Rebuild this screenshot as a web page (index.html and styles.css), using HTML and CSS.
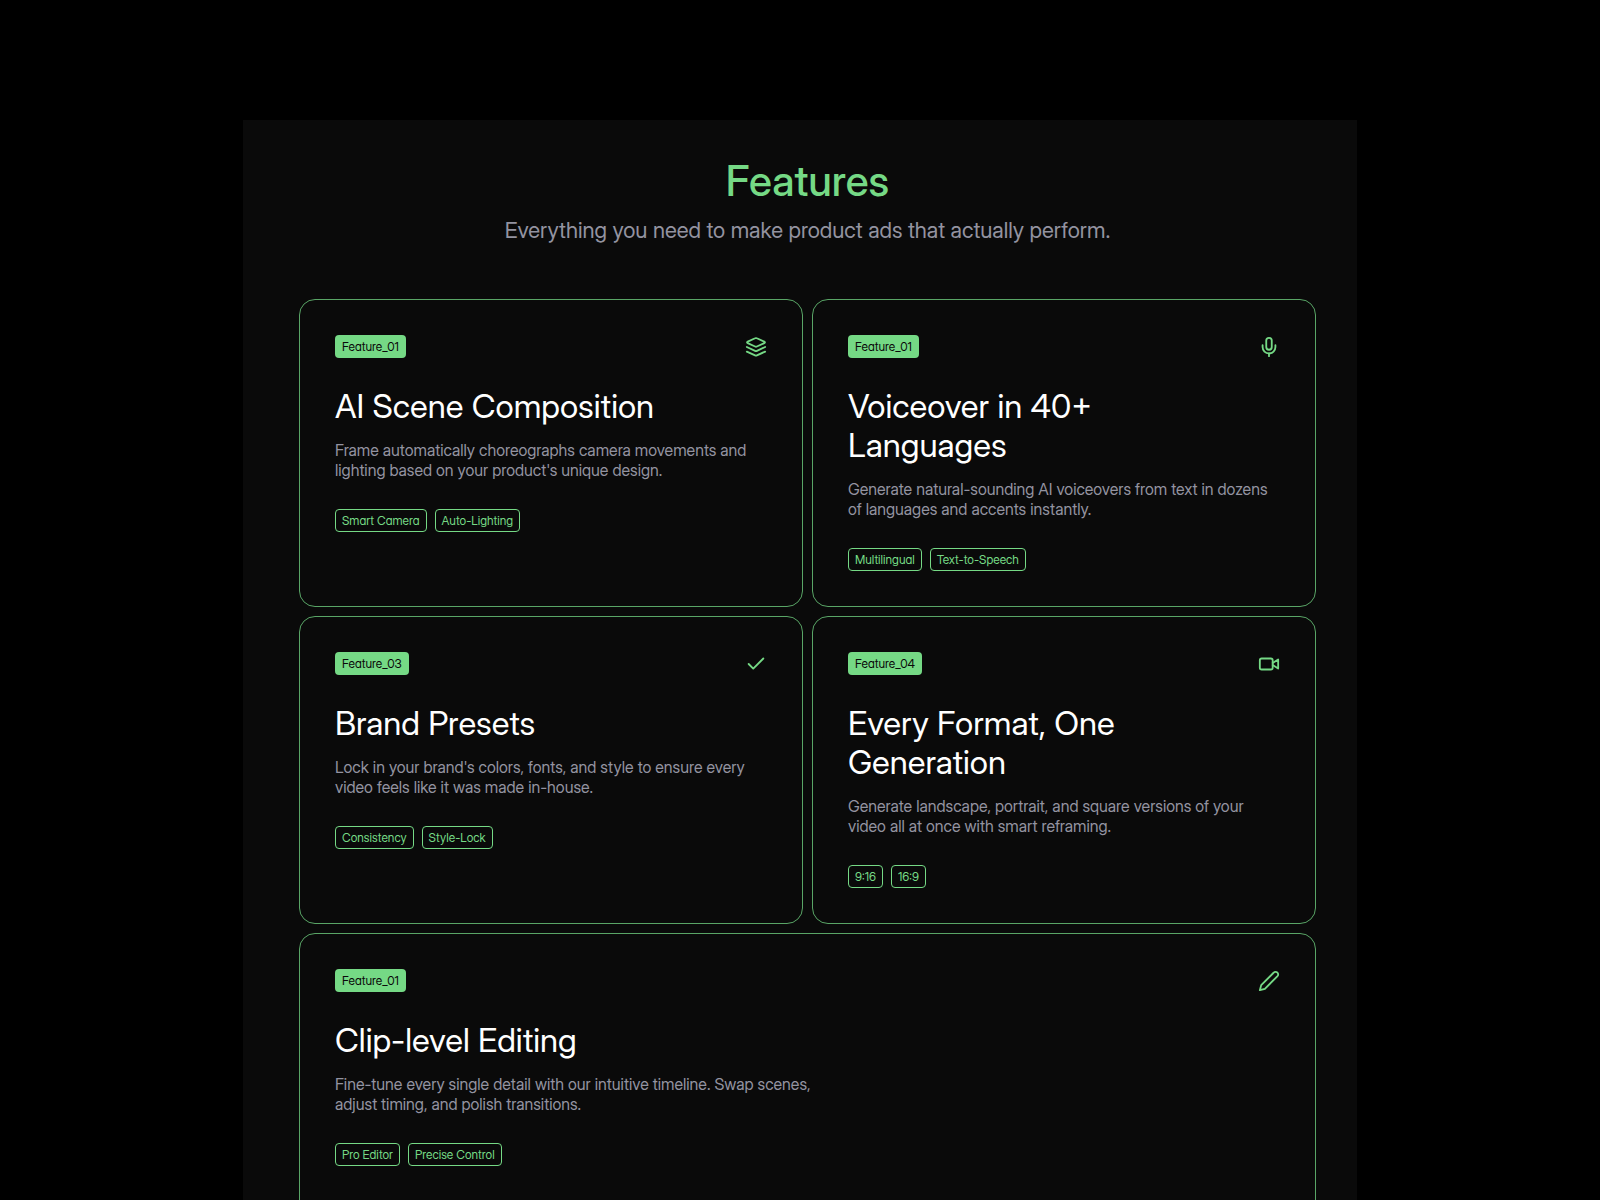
FILE: index.html
```html
<!DOCTYPE html>
<html lang="en">
<head>
<meta charset="utf-8">
<meta name="viewport" content="width=device-width, initial-scale=1">
<title>Features</title>
<link rel="stylesheet" href="styles.css">
</head>
<body>
<main class="panel">
  <header class="intro">
    <h1 class="intro-title">Features</h1>
    <p class="intro-text">Everything you need to make product ads that actually perform.</p>
  </header>
  <section class="grid">
    <article class="card">
      <div class="card-top">
        <span class="badge">Feature_01</span>
        <svg class="icon" viewBox="0 0 24 24" aria-hidden="true"><path d="M11 2.500 3 6.200Q1.400 7 3 7.800l8 3.700q1 .5 2 0l8-3.700q1.600-.8 0-1.600l-8-3.700q-1-.5-2 0Z"/><path d="m2 12 9 4.200q1 .5 2 0l9-4.200"/><path d="m2 17 9 4.200q1 .5 2 0l9-4.200"/></svg>
      </div>
      <h2 class="card-title">AI Scene Composition</h2>
      <p class="card-text">Frame automatically choreographs camera movements and lighting based on your product's unique design.</p>
      <ul class="tags"><li class="tag">Smart Camera</li><li class="tag">Auto-Lighting</li></ul>
    </article>
    <article class="card">
      <div class="card-top">
        <span class="badge">Feature_01</span>
        <svg class="icon" viewBox="0 0 24 24" aria-hidden="true"><rect x="9" y="2" width="6" height="13" rx="3"/><path d="M19 10v2a7 7 0 0 1-14 0v-2"/><path d="M12 19v3"/></svg>
      </div>
      <h2 class="card-title">Voiceover in 40+ Languages</h2>
      <p class="card-text">Generate natural-sounding AI voiceovers from text in dozens of languages and accents instantly.</p>
      <ul class="tags"><li class="tag">Multilingual</li><li class="tag">Text-to-Speech</li></ul>
    </article>
    <article class="card">
      <div class="card-top">
        <span class="badge">Feature_03</span>
        <svg class="icon" viewBox="0 0 24 24" aria-hidden="true"><path d="M20 6 9 17l-5-5"/></svg>
      </div>
      <h2 class="card-title">Brand Presets</h2>
      <p class="card-text">Lock in your brand's colors, fonts, and style to ensure every video feels like it was made in-house.</p>
      <ul class="tags"><li class="tag">Consistency</li><li class="tag">Style-Lock</li></ul>
    </article>
    <article class="card">
      <div class="card-top">
        <span class="badge">Feature_04</span>
        <svg class="icon" viewBox="0 0 24 24" aria-hidden="true"><rect x="2" y="6" width="14" height="12" rx="2"/><path d="m16 11 6-4v10l-6-4"/></svg>
      </div>
      <h2 class="card-title">Every Format, One Generation</h2>
      <p class="card-text">Generate landscape, portrait, and square versions of your video all at once with smart reframing.</p>
      <ul class="tags"><li class="tag">9:16</li><li class="tag">16:9</li></ul>
    </article>
    <article class="card card-wide">
      <div class="card-top">
        <span class="badge">Feature_01</span>
        <svg class="icon" viewBox="0 0 24 24" aria-hidden="true"><path d="M17 3a2.85 2.83 0 1 1 4 4L7.500 20.500 2 22l1.500-5.500Z"/></svg>
      </div>
      <h2 class="card-title">Clip-level Editing</h2>
      <p class="card-text">Fine-tune every single detail with our intuitive timeline. Swap scenes, adjust timing, and polish transitions.</p>
      <ul class="tags"><li class="tag">Pro Editor</li><li class="tag">Precise Control</li></ul>
    </article>
  </section>
</main>
</body>
</html>
```
FILE: styles.css
```css
:root {
  --green: #75d985;
  --surface: #0a0a0a;
  --muted: #9393a0;
}

* {
  box-sizing: border-box;
  margin: 0;
  padding: 0;
}

body {
  padding: 120px 24px 0;
  background: #000;
  color: #fff;
  font-family: "Inter Display", Inter, "Liberation Sans", sans-serif;
}

.panel {
  max-width: 1114px;
  margin: 0 auto;
  padding: 35px 41px 56px 56px;
  background: var(--surface);
}

.intro {
  display: grid;
  gap: 9px;
  margin-bottom: 55px;
  text-align: center;
}

.intro-title {
  color: var(--green);
  font-size: 42px;
  font-weight: 500;
  line-height: 52px;
}

.intro-text {
  color: var(--muted);
  font-size: 22px;
  line-height: 28px;
}

.grid {
  display: grid;
  grid-template-columns: 1fr 1fr;
  gap: 9px;
}

.card {
  padding: 35px;
  border: 1px solid #59a566;
  border-radius: 16px;
}

.card-wide {
  grid-column: 1 / -1;
  padding-bottom: 56px;
}

.card-top {
  display: flex;
  align-items: center;
  justify-content: space-between;
  margin-bottom: 29px;
}

.badge,
.tag {
  padding: 0 7px;
  border-radius: 4px;
  font-size: 12px;
  font-feature-settings: "cv11";
  line-height: 23px;
}

.badge {
  background: var(--green);
  color: var(--surface);
}

.icon {
  width: 22px;
  height: 22px;
  fill: none;
  stroke: var(--green);
  stroke-width: 2;
  stroke-linecap: round;
  stroke-linejoin: round;
}

.card-title {
  max-width: 380px;
  margin-bottom: 14px;
  font-size: 33px;
  font-weight: 400;
  line-height: 39px;
}

.card-text {
  max-width: 500px;
  margin-bottom: 29px;
  color: var(--muted);
  font-size: 16px;
  line-height: 20px;
}

.tags {
  display: flex;
  gap: 8px;
  list-style: none;
}

.tag {
  padding: 0 6px;
  border: 1px solid var(--green);
  color: var(--green);
  line-height: 21px;
}
```
